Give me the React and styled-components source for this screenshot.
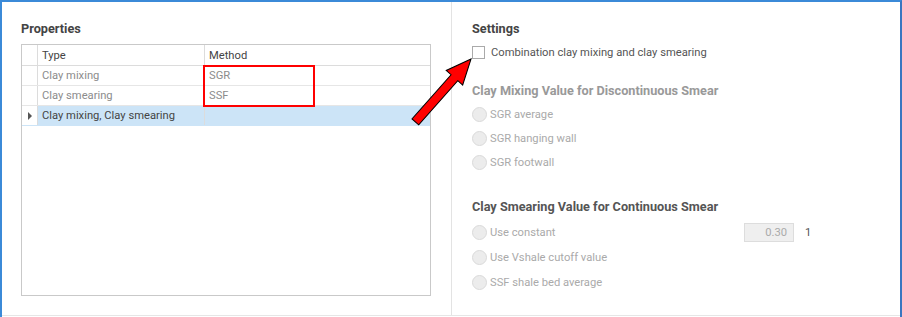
import React from 'react'
import styled, { createGlobalStyle } from 'styled-components'

const Global = createGlobalStyle`
  html, body { margin: 0; padding: 0; background: #fff; }
  body { font-family: Roboto, "Liberation Sans", sans-serif; font-size: 11.2px; }
`

const rows = [
  { type: 'Clay mixing', method: 'SGR' },
  { type: 'Clay smearing', method: 'SSF' },
  { type: 'Clay mixing, Clay smearing', method: '', selected: true },
]

export default function App() {
  return (
    <>
      <Global />
      <Frame>
        <Body>
          <LeftPanel>
            <Title>Properties</Title>
            <Grid>
              <HeadRow>
                <Indicator />
                <Cell>Type</Cell>
                <Cell last>Method</Cell>
              </HeadRow>
              {rows.map((r) => (
                <Row key={r.type} selected={r.selected}>
                  <Indicator>{r.selected && <Caret />}</Indicator>
                  <Cell>{r.type}</Cell>
                  <Cell last>{r.method}</Cell>
                </Row>
              ))}
            </Grid>
          </LeftPanel>
          <Divider />
          <RightPanel>
            <Title>Settings</Title>
            <CheckRow>
              <Check />
              <span>Combination clay mixing and clay smearing</span>
            </CheckRow>
            <Section>Clay Mixing Value for Discontinuous Smear</Section>
            <RadioRow><Radio />SGR average</RadioRow>
            <RadioRow><Radio />SGR hanging wall</RadioRow>
            <RadioRow><Radio />SGR footwall</RadioRow>
            <Section dark>Clay Smearing Value for Continuous Smear</Section>
            <RadioRow tall>
              <Radio />
              <RadioLabel>Use constant</RadioLabel>
              <NumBox>0.30</NumBox>
              <Unit>1</Unit>
            </RadioRow>
            <RadioRow tall><Radio />Use Vshale cutoff value</RadioRow>
            <RadioRow tall><Radio />SSF shale bed average</RadioRow>
          </RightPanel>
        </Body>
        <Highlight />
        <Arrow viewBox="0 0 902 317">
          <g transform="translate(471 59) rotate(131.5)">
            <polygon
              points="0,0 25,-11 25,-4.5 84,-4.5 84,4.5 25,4.5 25,11"
              fill="#ff0000"
              stroke="#000"
              strokeWidth="1"
              strokeLinejoin="miter"
            />
          </g>
        </Arrow>
      </Frame>
    </>
  )
}

const Frame = styled.div`
  position: relative;
  width: 902px;
  height: 317px;
  box-sizing: border-box;
  border-top: 2px solid #3b8ad8;
  border-left: 2px solid #3b8ad8;
  border-right: 2px solid #3a76c0;
  overflow: hidden;
`
const Body = styled.div`
  display: flex;
  height: 313px;
  border-bottom: 1px solid #e6e6e6;
`
const LeftPanel = styled.div`
  width: 449px;
  box-sizing: border-box;
  padding: 19px 20px 0 19px;
`
const Divider = styled.div`
  width: 1px;
  background: #e3e3e3;
`
const RightPanel = styled.div`
  flex: 1;
  padding: 19px 20px 0 20px;
  color: #aaa;
`
const Title = styled.div`
  font-weight: bold;
  font-size: 12.7px;
  color: #444;
  line-height: 16px;
  margin-bottom: 7px;
`
const Grid = styled.div`
  height: 252px;
  box-sizing: border-box;
  border: 1px solid #c9c9c9;
  margin-top: 1px;
`
const HeadRow = styled.div`
  display: flex;
  height: 21px;
  border-bottom: 1px solid #dcdcdc;
  box-sizing: border-box;
  color: #444;
`
const Row = styled.div`
  display: flex;
  height: 20px;
  box-sizing: border-box;
  border-bottom: 1px solid ${(p) => (p.selected ? '#cce4f7' : '#e6e6e6')};
  color: ${(p) => (p.selected ? '#444' : '#8c8c8c')};
  & > div:not(:first-child) {
    background: ${(p) => (p.selected ? '#cce4f7' : 'transparent')};
  }
`
const Indicator = styled.div`
  width: 15px;
  flex: none;
  border-right: 1px solid #dcdcdc;
  display: flex;
  align-items: center;
  justify-content: center;
`
const Caret = styled.span`
  width: 0;
  height: 0;
  border-top: 4px solid transparent;
  border-bottom: 4px solid transparent;
  border-left: 4px solid #555;
`
const Cell = styled.div`
  box-sizing: border-box;
  ${(p) => (p.last ? 'flex: 1;' : 'width: 167px; border-right: 1px solid #dcdcdc;')}
  padding-left: 4px;
  display: flex;
  align-items: center;
  white-space: nowrap;
`
const CheckRow = styled.div`
  display: flex;
  align-items: center;
  gap: 6px;
  height: 16px;
  color: #555;
  margin-bottom: 23px;
`
const Check = styled.span`
  width: 11px;
  height: 11px;
  border: 1px solid #aaa;
  background: #fff;
`
const Section = styled.div`
  font-weight: bold;
  font-size: 12.7px;
  color: ${(p) => (p.dark ? '#555' : '#999')};
  line-height: 16px;
  margin-bottom: ${(p) => (p.dark ? '5px' : '3px')};
  margin-top: ${(p) => (p.dark ? '25px' : '0')};
`
const RadioRow = styled.div`
  display: flex;
  align-items: center;
  height: ${(p) => (p.tall ? '25px' : '24px')};
  color: #aaa;
  white-space: nowrap;
`
const Radio = styled.span`
  width: 13px;
  height: 13px;
  border-radius: 50%;
  border: 1px solid #dadada;
  background: #ececec;
  margin-right: 3px;
  flex: none;
`
const RadioLabel = styled.span`
  width: 254px;
`
const NumBox = styled.div`
  width: 50px;
  height: 19px;
  box-sizing: border-box;
  border: 1px solid #dddddd;
  background: #efefef;
  color: #aaa;
  text-align: right;
  padding-right: 6px;
  line-height: 17px;
`
const Unit = styled.span`
  margin-left: 11px;
  color: #555;
`
const Highlight = styled.div`
  position: absolute;
  left: 201px;
  top: 63px;
  width: 112px;
  height: 42px;
  box-sizing: border-box;
  border: 2px solid #ff0000;
`
const Arrow = styled.svg`
  position: absolute;
  left: -2px;
  top: -2px;
  width: 902px;
  height: 317px;
  pointer-events: none;
`
